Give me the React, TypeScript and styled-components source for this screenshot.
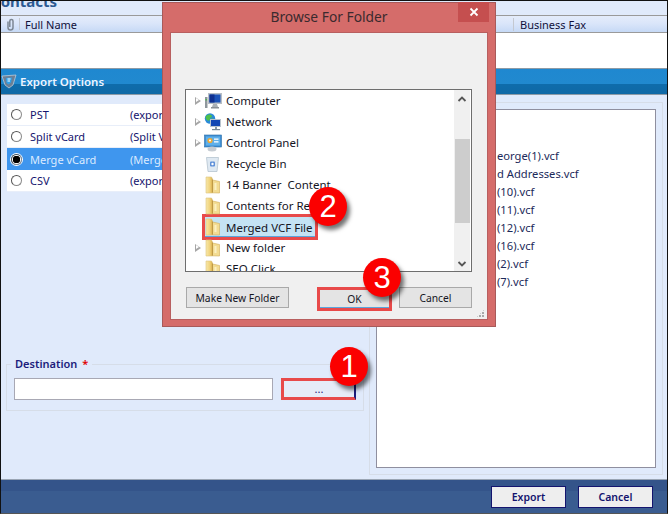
import React from 'react'
import styled, { createGlobalStyle } from 'styled-components'

const GlobalStyle = createGlobalStyle`
  html, body { margin: 0; padding: 0; background: #fff; }
  * { box-sizing: border-box; }
  body { font-family: "Noto Sans", "Liberation Sans", sans-serif; font-size: 11px; }
`

const Screen = styled.div`
  position: relative;
  width: 668px;
  height: 514px;
  overflow: hidden;
  display: flex;
  flex-direction: column;
  background: #e0eafb;
  border-top: 1px solid #111;
  border-left: 1px solid #111;
  border-right: 1px solid #111;
  border-bottom: 1px solid #555;
`

const ContactsTitle = styled.div`
  height: 14px;
  flex: none;
  overflow: hidden;
  font-size: 15px;
  font-weight: 700;
  line-height: 14px;
  margin-left: -10px;
  color: #2c5a93;
  & > span { display: block; margin-top: -7px; }
`

const TableHead = styled.div`
  height: 18px;
  flex: none;
  display: flex;
  align-items: center;
  border-top: 1px solid #9a9a9a;
  border-bottom: 1px solid #9a9a9a;
  background: linear-gradient(#e4ecfb 0%, #dbe6fa 45%, #c6d9f6 100%);
  color: #10103a;
`

const ClipCell = styled.div`
  width: 19px;
  height: 12px;
  flex: none;
  display: flex;
  justify-content: center;
  align-items: center;
  border-right: 1px solid #c4c8d0;
`

const NameCell = styled.div`
  width: 493px;
  flex: none;
  padding-left: 5px;
  line-height: 15px;
`

const FaxCell = styled.div`
  flex: 1;
  padding-left: 6px;
  border-left: 1px solid #c4c8d0;
  line-height: 13px;
`

const TableBody = styled.div`
  height: 35px;
  flex: none;
  background: #fff;
`

const ExportBar = styled.div`
  height: 27px;
  flex: none;
  display: flex;
  align-items: center;
  gap: 3px;
  padding-bottom: 1px;
  border-top: 1px solid #8c9aa6;
  border-bottom: 1px solid #8c9aa6;
  background: linear-gradient(#1f88d0 0%, #2189cf 60%, #0f6cab 62%, #0f69a6 100%);
  color: #eef5ff;
  font-size: 11.5px;
  font-weight: 600;
`

const Main = styled.div`
  flex: 1;
  display: flex;
  gap: 6px;
  padding: 7px 4px 4px 5px;
  min-height: 0;
`

const LeftColumn = styled.div`
  width: 357px;
  flex: none;
  display: flex;
  flex-direction: column;
  justify-content: space-between;
  padding-bottom: 64px;
`

const OptionList = styled.div`
  margin: 2px 0 0 1px;
  display: flex;
  flex-direction: column;
  background: #eef3fc;
`

const OptionRow = styled.div<{ $selected?: boolean }>`
  height: 22px;
  display: flex;
  align-items: center;
  padding-left: 4px;
  background: ${p => (p.$selected ? '#3f96ee' : '#fff')};
  color: ${p => (p.$selected ? '#dcebff' : '#14146e')};
  border-bottom: ${p => (p.$selected ? 'none' : '1px solid #e8eef9')};
`

const Radio = styled.span<{ $on?: boolean }>`
  width: 11px;
  height: 11px;
  flex: none;
  border-radius: 50%;
  background: ${p => (p.$on ? 'radial-gradient(circle, #000 0 3.5px, #fff 4px)' : '#fff')};
  border: 1px solid #8a8a8a;
  border-top-color: #555;
  border-left-color: #555;
  margin-right: 8px;
  box-shadow: ${p => (p.$on ? '0 0 0 1px #fff' : 'none')};
`

const OptionName = styled.span`
  width: 100px;
  flex: none;
`

const Destination = styled.fieldset`
  margin: 0;
  padding: 7px 7px 0;
  height: 54px;
  border: 1px solid #d6dde8;
  display: flex;
  gap: 8px;
  align-items: flex-start;
`

const DestinationLegend = styled.legend`
  padding: 0 4px;
  margin-left: -3px;
  font-weight: 600;
  line-height: 14px;
  color: #1c1c7c;
  & > i { color: #e00000; font-style: normal; margin-left: 5px; }
`

const PathInput = styled.div`
  width: 259px;
  height: 22px;
  border: 1px solid #a8a8b4;
  background: #fff;
`

const BrowseButton = styled.div`
  width: 75px;
  height: 22px;
  border: 3px solid #e84a4a;
  border-right: 2px solid #1c1c7c;
  display: flex;
  justify-content: center;
  line-height: 15px;
  color: #1c1c7c;
  background: #e6ecf8;
`

const RightFrame = styled.div`
  flex: 1;
  border: 1px solid #d6dde8;
  padding: 6px;
  display: flex;
`

const FileBox = styled.div`
  flex: 1;
  background: #fff;
  border: 1px solid #8f8f9f;
  padding: 37px 0 0 120px;
  color: #1c2a5a;
  font-size: 11.2px;
`

const FileRow = styled.div`
  height: 18px;
  line-height: 18px;
  white-space: nowrap;
`

const Footer = styled.div`
  height: 34px;
  flex: none;
  display: flex;
  justify-content: flex-end;
  align-items: center;
  gap: 12px;
  padding-right: 14px;
  border-top: 1px solid #9aa5b4;
  background: linear-gradient(#34548a 0 33%, #3a5c90 34%);
`

const FooterButton = styled.div`
  width: 75px;
  height: 22px;
  border: 1px solid #14146e;
  background: #eeeeee;
  color: #14146e;
  font-size: 10.5px;
  font-weight: 600;
  display: flex;
  align-items: center;
  justify-content: center;
`

const BrowseDialog = styled.div`
  position: absolute;
  left: 161px;
  top: 1px;
  width: 334px;
  height: 325px;
  display: flex;
  flex-direction: column;
  background: #d56c6a;
  border: 1px solid #a85a5a;
  padding: 0 7px 6px;
  font-size: 11.5px;
`

const DialogHead = styled.div`
  height: 29px;
  flex: none;
  position: relative;
  display: flex;
  justify-content: center;
  align-items: center;
  font-size: 13.8px;
  color: #3a2a2e;
  padding-bottom: 2px;
`

const CloseButton = styled.div`
  position: absolute;
  right: -1px;
  top: -1px;
  width: 31px;
  height: 20px;
  background: #c54f4f;
  display: flex;
  align-items: center;
  justify-content: center;
`

const DialogPanel = styled.div`
  flex: 1;
  background: #f0f0f0;
  border: 1px solid #b85f5f;
  padding: 56px 15px 0 14px;
  display: flex;
  flex-direction: column;
  position: relative;
`

const TreeBox = styled.div`
  height: 183px;
  flex: none;
  border: 1px solid #6e6e6e;
  background: #fff;
  display: flex;
  overflow: hidden;
`

const TreeList = styled.div`
  flex: 1;
  padding-left: 9px;
  overflow: hidden;
  color: #15151f;
`

const TreeRow = styled.div`
  height: 21px;
  display: flex;
  align-items: center;
  white-space: pre;
`

const Twist = styled.span<{ $hidden?: boolean }>`
  width: 0;
  height: 0;
  flex: none;
  margin-right: 3px;
  border-left: 6px solid #a6a6a6;
  border-top: 4px solid transparent;
  border-bottom: 4px solid transparent;
  position: relative;
  visibility: ${p => (p.$hidden ? 'hidden' : 'visible')};
  &::after {
    content: '';
    position: absolute;
    left: -5px;
    top: -2.5px;
    border-left: 3.5px solid #fff;
    border-top: 2.5px solid transparent;
    border-bottom: 2.5px solid transparent;
  }
`

const IconSlot = styled.span`
  width: 18px;
  height: 18px;
  flex: none;
  margin-right: 4px;
  display: flex;
`

const RowLabel = styled.span`
  line-height: 17px;
`

const PickedRow = styled.div`
  height: 26px;
  width: 116px;
  margin: -2px 0 -3px 7px;
  display: flex;
  align-items: center;
  background: #c4e3f4;
  border: 3px solid #e84a4a;
  box-shadow: inset 0 -1px 0 #5aa5dc;
  white-space: nowrap;
  & > span:first-child { margin-left: -1px; }
`

const ScrollTrack = styled.div`
  width: 16px;
  flex: none;
  margin-right: 1px;
  background: #f0f0f0;
  display: flex;
  flex-direction: column;
  align-items: center;
`

const ScrollArrow = styled.div<{ $down?: boolean }>`
  height: 18px;
  flex: none;
  display: flex;
  align-items: center;
  justify-content: center;
  padding-top: ${p => (p.$down ? 4 : 0)}px;
`

const ScrollThumb = styled.div`
  width: 15px;
  height: 84px;
  margin-top: 31px;
  margin-bottom: auto;
  background: #cdcdcd;
`

const DialogButtons = styled.div`
  display: flex;
  align-items: flex-start;
  margin-top: 15px;
  padding-left: 1px;
  font-size: 10.3px;
`

const DialogButton = styled.div<{ $width: number; $gap?: number; $picked?: boolean }>`
  width: ${p => p.$width}px;
  height: 21px;
  margin-left: ${p => p.$gap ?? 0}px;
  background: #e4e4e4;
  border: 1px solid #a9a9a9;
  display: flex;
  align-items: center;
  justify-content: center;
  color: #15151f;
  ${p => p.$picked && `
    height: 24px;
    border: 3px solid #e84a4a;
    box-shadow: inset 0 -1px 0 #5aa5dc;
  `}
`

const Grip = styled.div`
  position: absolute;
  right: 2px;
  bottom: 1px;
  width: 9px;
  height: 9px;
  background-image: radial-gradient(circle at 1px 1px, #a8a8a8 1px, transparent 1.2px);
  background-size: 3px 3px;
  clip-path: polygon(100% 0, 100% 100%, 0 100%);
`

const Callout = styled.div<{ $x: number; $y: number }>`
  position: absolute;
  left: ${p => p.$x}px;
  top: ${p => p.$y}px;
  width: 38px;
  height: 39px;
  border-radius: 50%;
  background: #fb0000;
  color: #fff;
  font-family: "Liberation Sans", sans-serif;
  font-size: 31px;
  line-height: 39px;
  text-align: center;
  box-shadow: 3px 4px 4px rgba(0, 0, 0, 0.55);
`

const FolderIcon = () => (
  <svg width="18" height="18" viewBox="0 0 18 18">
    <defs>
      <linearGradient id="fold" x1="0" y1="0" x2="1" y2="0">
        <stop offset="0" stopColor="#f8e8aa" />
        <stop offset="0.6" stopColor="#f0d27a" />
        <stop offset="1" stopColor="#d8ae4c" />
      </linearGradient>
    </defs>
    <path d="M2 1h5.5l1 2v14H2z" fill="url(#fold)" stroke="#dcc27c" strokeWidth=".6" />
    <path d="M8.5 4L15.5 5.5V17l-7-.2z" fill="#f3dc92" stroke="#d2ad55" strokeWidth=".6" />
    <path d="M10.5 7h2v7h-2z" fill="#fbf0c4" />
    <path d="M8.5 3.5v13" stroke="#b8923e" strokeWidth=".8" />
  </svg>
)

const ComputerIcon = () => (
  <svg width="18" height="18" viewBox="0 0 18 18">
    <rect x="1" y="5" width="2.5" height="11" fill="#8f979c" />
    <rect x="1.6" y="7" width="1.2" height="1.5" fill="#3fbf3f" />
    <rect x="4" y="1" width="14" height="11" fill="#b8bfc6" />
    <rect x="5.5" y="2.5" width="11" height="8" fill="#1b52b8" />
    <rect x="5.5" y="2.5" width="5" height="8" fill="#0f2f90" />
    <path d="M9 12h4l1 3H8z" fill="#aab0b6" />
    <rect x="7" y="15" width="8" height="1.5" fill="#8a9096" />
  </svg>
)

const NetworkIcon = () => (
  <svg width="18" height="18" viewBox="0 0 18 18">
    <circle cx="6" cy="5.5" r="5.2" fill="#2a8ad8" />
    <path d="M2 3c2-2 5-2 6 0 0 2-2 1-2 3s-2 2-3 1-2-2-1-4zM7 6c1-1 3 0 3 1s-2 2-3 1z" fill="#4fc04a" />
    <rect x="6" y="6" width="11" height="8" fill="#b9c4cf" />
    <rect x="7" y="7" width="9" height="6" fill="#1448b4" />
    <rect x="11" y="14" width="2" height="2" fill="#8a9aa8" />
    <rect x="8" y="16" width="8" height="1.2" fill="#7a8a98" />
  </svg>
)

const PanelIcon = () => (
  <svg width="18" height="18" viewBox="0 0 18 18">
    <rect x="0.5" y="1" width="17" height="12" fill="#3f8ed2" stroke="#2a6ea8" strokeWidth=".6" />
    <rect x="2" y="2.5" width="14" height="9" fill="#5fb0ea" />
    <circle cx="6" cy="6.5" r="2.6" fill="#f0a830" />
    <circle cx="6" cy="6.5" r="1" fill="#fff" />
    <rect x="10" y="4.5" width="4.5" height="1.3" fill="#fff" />
    <rect x="10" y="7.2" width="4.5" height="1.3" fill="#fff" />
    <ellipse cx="8" cy="15" rx="4.5" ry="2.5" fill="#c6ccd2" />
  </svg>
)

const BinIcon = () => (
  <svg width="18" height="18" viewBox="0 0 18 18">
    <path d="M2.5 2.5h12l-1.5 14h-9z" fill="#dfe9f2" stroke="#aebdca" strokeWidth=".7" />
    <rect x="6" y="6.5" width="5" height="5" rx="1" fill="#5f90d8" />
    <circle cx="8.5" cy="9" r="1.2" fill="#fff" />
  </svg>
)

const ClipIcon = () => (
  <svg width="11" height="13" viewBox="0 0 11 13">
    <path d="M3 3.5v6a2.5 2.5 0 0 0 5 0V3a1.6 1.6 0 0 0-3.2 0v6" fill="none" stroke="#7d8794" strokeWidth="1.5" />
  </svg>
)

const ShieldLogo = () => (
  <svg width="16" height="16" viewBox="0 0 16 16">
    <path d="M1 3l14-1-3 10-4 3-4-3z" fill="#6a7f96" stroke="#c8d4e0" strokeWidth=".7" />
    <path d="M5 5l6-.5-1 5-2.5 2L5.5 10z" fill="#2fa0e8" />
    <path d="M6.5 6h3M6.5 8h2.5" stroke="#fff" strokeWidth="1" />
  </svg>
)

const Chevron = ({ up }: { up?: boolean }) => (
  <svg width="10" height="8" viewBox="0 0 10 8">
    <path d={up ? 'M1.5 6L5 2.5 8.5 6' : 'M1.5 2L5 5.5 8.5 2'} fill="none" stroke="#555" strokeWidth="1.8" />
  </svg>
)

const options = [
  { name: 'PST', note: '(expor' },
  { name: 'Split vCard', note: '(Split V' },
  { name: 'Merge vCard', note: '(Merge', selected: true },
  { name: 'CSV', note: '(expor' },
]

const files = ['eorge(1).vcf', 'd Addresses.vcf', '(10).vcf', '(11).vcf', '(12).vcf', '(16).vcf', '(2).vcf', '(7).vcf']

const App = () => {
  return (
    <>
      <GlobalStyle />
      <Screen>
        <ContactsTitle><span>Contacts</span></ContactsTitle>
        <TableHead>
          <ClipCell><ClipIcon /></ClipCell>
          <NameCell>Full Name</NameCell>
          <FaxCell>Business Fax</FaxCell>
        </TableHead>
        <TableBody />
        <ExportBar>
          <ShieldLogo />
          <span>Export Options</span>
        </ExportBar>
        <Main>
          <LeftColumn>
            <OptionList>
              {options.map(o => (
                <OptionRow key={o.name} $selected={o.selected}>
                  <Radio $on={o.selected} />
                  <OptionName>{o.name}</OptionName>
                  <span>{o.note}</span>
                </OptionRow>
              ))}
            </OptionList>
            <Destination>
              <DestinationLegend>Destination<i>*</i></DestinationLegend>
              <PathInput />
              <BrowseButton>...</BrowseButton>
            </Destination>
          </LeftColumn>
          <RightFrame>
            <FileBox>
              {files.map(f => <FileRow key={f}>{f}</FileRow>)}
            </FileBox>
          </RightFrame>
        </Main>
        <Footer>
          <FooterButton>Export</FooterButton>
          <FooterButton>Cancel</FooterButton>
        </Footer>

        <BrowseDialog>
          <DialogHead>
            Browse For Folder
            <CloseButton>
              <svg width="10" height="10" viewBox="0 0 10 10">
                <path d="M1.5 1.5l7 7M8.5 1.5l-7 7" stroke="#fff" strokeWidth="1.8" />
              </svg>
            </CloseButton>
          </DialogHead>
          <DialogPanel>
            <TreeBox>
              <TreeList>
                <TreeRow><Twist /><IconSlot><ComputerIcon /></IconSlot><RowLabel>Computer</RowLabel></TreeRow>
                <TreeRow><Twist /><IconSlot><NetworkIcon /></IconSlot><RowLabel>Network</RowLabel></TreeRow>
                <TreeRow><Twist /><IconSlot><PanelIcon /></IconSlot><RowLabel>Control Panel</RowLabel></TreeRow>
                <TreeRow><Twist $hidden /><IconSlot><BinIcon /></IconSlot><RowLabel>Recycle Bin</RowLabel></TreeRow>
                <TreeRow><Twist $hidden /><IconSlot><FolderIcon /></IconSlot><RowLabel>14 Banner  Content</RowLabel></TreeRow>
                <TreeRow><Twist $hidden /><IconSlot><FolderIcon /></IconSlot><RowLabel>Contents for Re</RowLabel></TreeRow>
                <PickedRow><IconSlot><FolderIcon /></IconSlot><RowLabel>Merged VCF File</RowLabel></PickedRow>
                <TreeRow><Twist /><IconSlot><FolderIcon /></IconSlot><RowLabel>New folder</RowLabel></TreeRow>
                <TreeRow><Twist $hidden /><IconSlot><FolderIcon /></IconSlot><RowLabel>SEO Click</RowLabel></TreeRow>
              </TreeList>
              <ScrollTrack>
                <ScrollArrow><Chevron up /></ScrollArrow>
                <ScrollThumb />
                <ScrollArrow $down><Chevron /></ScrollArrow>
              </ScrollTrack>
            </TreeBox>
            <DialogButtons>
              <DialogButton $width={103}>Make New Folder</DialogButton>
              <DialogButton $width={75} $gap={28} $picked>OK</DialogButton>
              <DialogButton $width={73} $gap={7}>Cancel</DialogButton>
            </DialogButtons>
            <Grip />
          </DialogPanel>
        </BrowseDialog>

        <Callout $x={329} $y={346}>1</Callout>
        <Callout $x={308} $y={186}>2</Callout>
        <Callout $x={362} $y={257}>3</Callout>
      </Screen>
    </>
  )
}

export default App
